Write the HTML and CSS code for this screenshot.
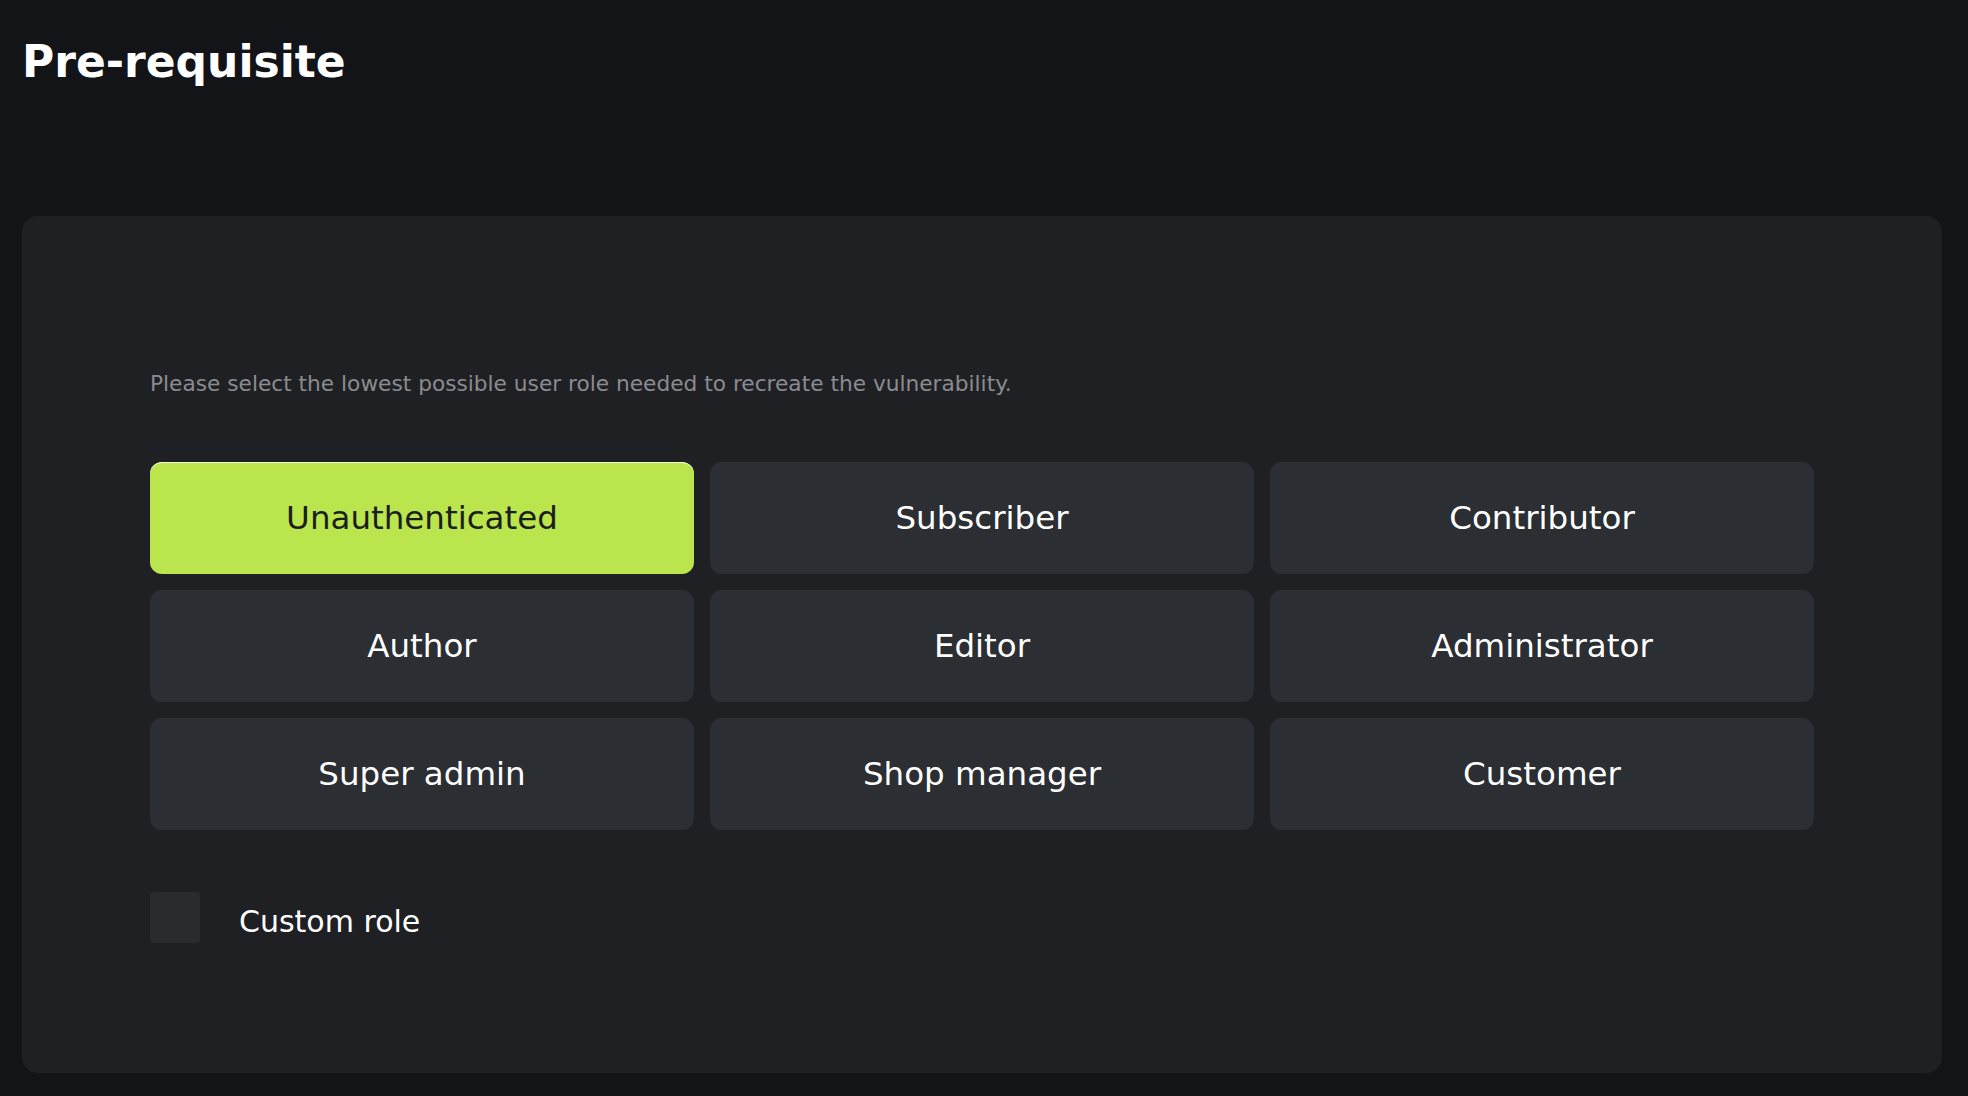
FILE: index.html
```html
<!DOCTYPE html>
<html lang="en">
<head>
<meta charset="utf-8">
<title>Pre-requisite</title>
<link rel="stylesheet" href="styles.css">
</head>
<body>
<main class="page">
  <h1 class="title">Pre-requisite</h1>
  <section class="card">
    <p class="hint">Please select the lowest possible user role needed to recreate the vulnerability.</p>
    <div class="roles">
      <button class="role role--active">Unauthenticated</button>
      <button class="role">Subscriber</button>
      <button class="role">Contributor</button>
      <button class="role">Author</button>
      <button class="role">Editor</button>
      <button class="role">Administrator</button>
      <button class="role">Super admin</button>
      <button class="role">Shop manager</button>
      <button class="role">Customer</button>
    </div>
    <label class="custom">
      <span class="checkbox"></span>
      <span class="custom-label">Custom role</span>
    </label>
  </section>
</main>
</body>
</html>
```
FILE: styles.css
```css
* { box-sizing: border-box; }
html, body { margin: 0; padding: 0; }
body {
  background: #131418;
  color: #ffffff;
  font-family: "DejaVu Sans", sans-serif;
  width: 1968px;
  height: 1096px;
  overflow: hidden;
}
.page {
  padding: 36px 0 0 22px;
}
.title {
  margin: 0 0 128px 0;
  font-size: 44px;
  line-height: 52px;
  font-weight: 700;
  color: #ffffff;
}
.card {
  width: 1920px;
  height: 857px;
  background: #1f2024;
  border-radius: 16px;
  padding: 154px 128px 0 128px;
}
.hint {
  margin: 0;
  font-size: 21.7px;
  line-height: 28px;
  color: #8a8b8f;
}
.roles {
  margin-top: 64px;
  display: grid;
  grid-template-columns: repeat(3, 1fr);
  grid-auto-rows: 112px;
  gap: 16px;
}
.role {
  display: flex;
  align-items: center;
  justify-content: center;
  border: none;
  border-radius: 12px;
  background: #2b2e32;
  color: #ffffff;
  font-family: "DejaVu Sans", sans-serif;
  font-size: 32.5px;
  font-weight: 400;
  padding: 0;
  cursor: pointer;
}
.role--active {
  background: #bae54c;
  color: #1b1d1f;
  box-shadow: inset 0 1px 0 #f1fbd3;
}
.custom {
  margin-top: 62px;
  display: flex;
  align-items: center;
  gap: 39px;
}
.checkbox {
  width: 50px;
  height: 51px;
  border-radius: 4px;
  background: #2a2b2f;
}
.custom-label {
  font-size: 30px;
  padding-top: 7px;
  color: #ffffff;
}
```
